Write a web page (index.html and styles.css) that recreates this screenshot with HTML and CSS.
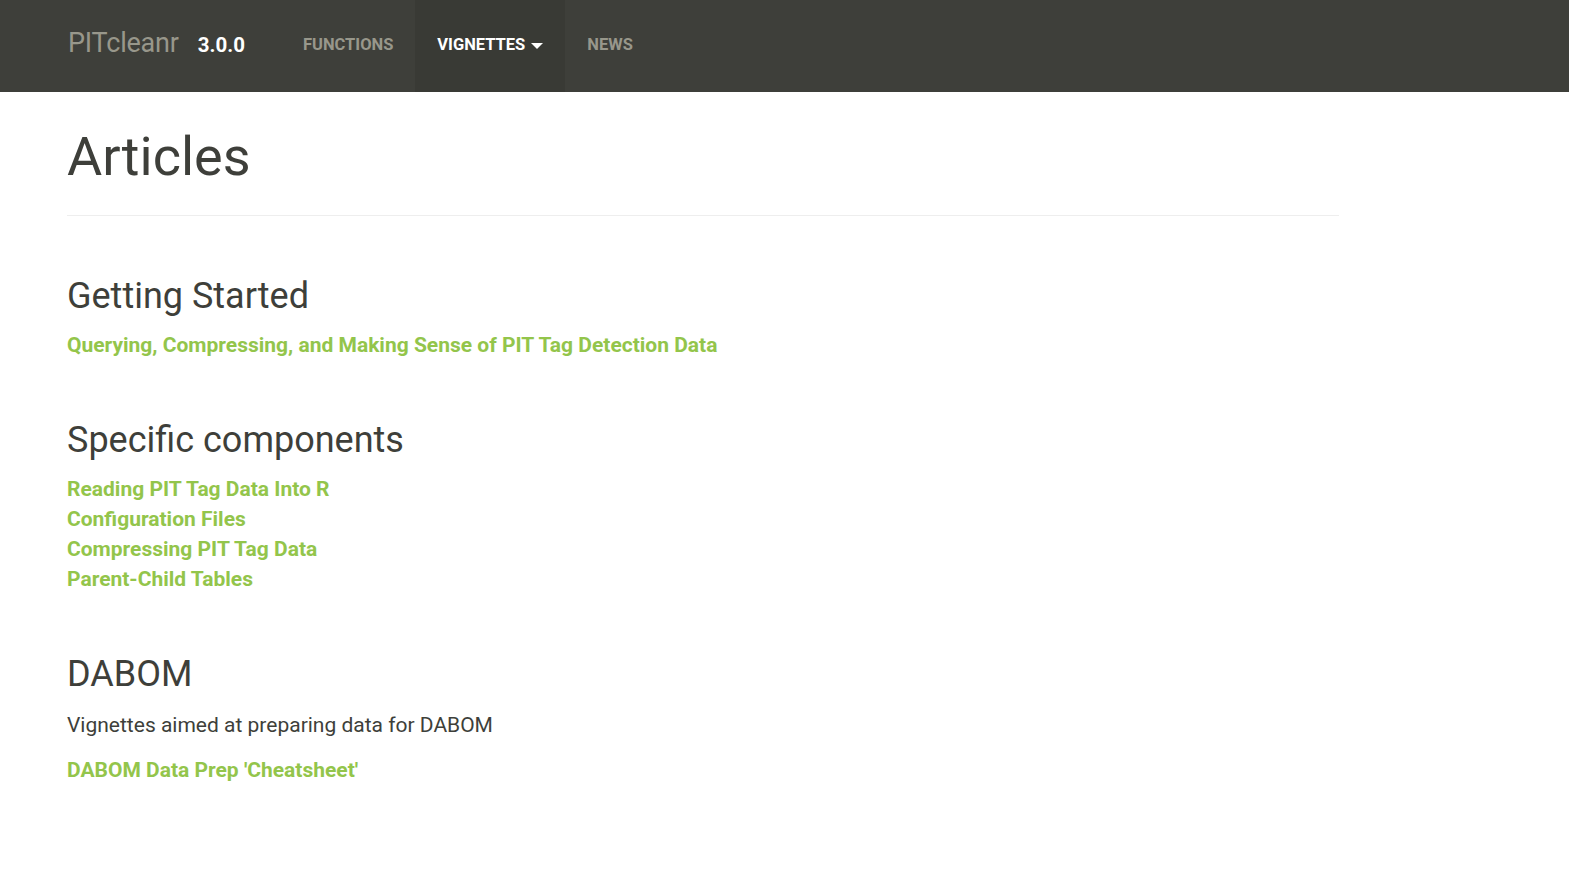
FILE: index.html
```html
<!DOCTYPE html>
<html lang="en">
<head>
<meta charset="utf-8">
<title>Articles • PITcleanr</title>
<link rel="stylesheet" href="styles.css">
</head>
<body>
<header class="navbar">
  <div class="brand-group">
    <a class="brand" href="#">PITcleanr</a>
    <span class="version">3.0.0</span>
  </div>
  <nav class="nav">
    <a class="nav-link" href="#">Functions</a>
    <a class="nav-link active" href="#">Vignettes <span class="caret"></span></a>
    <a class="nav-link" href="#">News</a>
  </nav>
</header>
<main class="container">
  <div class="page-header">
    <h1>Articles</h1>
  </div>
  <section class="section">
    <h3>Getting Started</h3>
    <ul class="article-list">
      <li><a href="#">Querying, Compressing, and Making Sense of PIT Tag Detection Data</a></li>
    </ul>
  </section>
  <section class="section">
    <h3>Specific components</h3>
    <ul class="article-list">
      <li><a href="#">Reading PIT Tag Data Into R</a></li>
      <li><a href="#">Configuration Files</a></li>
      <li><a href="#">Compressing PIT Tag Data</a></li>
      <li><a href="#">Parent-Child Tables</a></li>
    </ul>
  </section>
  <section class="section">
    <h3>DABOM</h3>
    <p class="section-desc">Vignettes aimed at preparing data for DABOM</p>
    <ul class="article-list">
      <li><a href="#">DABOM Data Prep 'Cheatsheet'</a></li>
    </ul>
  </section>
</main>
</body>
</html>
```
FILE: styles.css
```css
* { box-sizing: border-box; }
html, body { margin: 0; padding: 0; background: #ffffff; }
body {
  font-family: Roboto, "Helvetica Neue", Arial, sans-serif;
  font-size: 21px;
  line-height: 30px;
  color: #3e3f3a;
}
a { text-decoration: none; }

.navbar {
  height: 92px;
  background: #3e3f3a;
  display: flex;
  align-items: stretch;
  padding-left: 68px;
}
.brand-group {
  display: flex;
  align-items: baseline;
  padding-top: 25px;
  margin-right: 36px;
}
.brand {
  font-size: 27px;
  line-height: 36px;
  color: #98978b;
  letter-spacing: -0.2px;
}
.version {
  margin-left: 19px;
  font-size: 20.5px;
  font-weight: 700;
  color: #ffffff;
}
.nav { display: flex; align-items: stretch; }
.nav-link {
  display: flex;
  align-items: center;
  padding: 0 22px 3px;
  font-size: 16.5px;
  font-weight: 700;
  text-transform: uppercase;
  color: #98978b;
}
.nav-link.active {
  background: #393a35;
  color: #ffffff;
}
.caret {
  display: inline-block;
  width: 0;
  height: 0;
  margin-left: 6px;
  margin-top: 2px;
  border-top: 6px solid #ffffff;
  border-left: 6px solid transparent;
  border-right: 6px solid transparent;
}

.container {
  padding: 0 0 0 67px;
  width: 1339px;
}
.page-header {
  margin-top: 35px;
  padding-bottom: 29px;
  border-bottom: 1px solid #eeeeee;
}
h1 {
  margin: 0;
  font-size: 54px;
  line-height: 1.1;
  font-weight: 400;
  color: #3e3f3a;
}
.section { margin-top: 61px; }
h3 {
  margin: 0 0 13px;
  font-size: 36px;
  line-height: 1.1;
  font-weight: 400;
  color: #3e3f3a;
}
.section-desc { margin: 16px 0 15px; }
.article-list {
  list-style: none;
  margin: 0;
  padding: 0;
}
.article-list a {
  color: #93c54b;
  font-weight: 700;
}
```
